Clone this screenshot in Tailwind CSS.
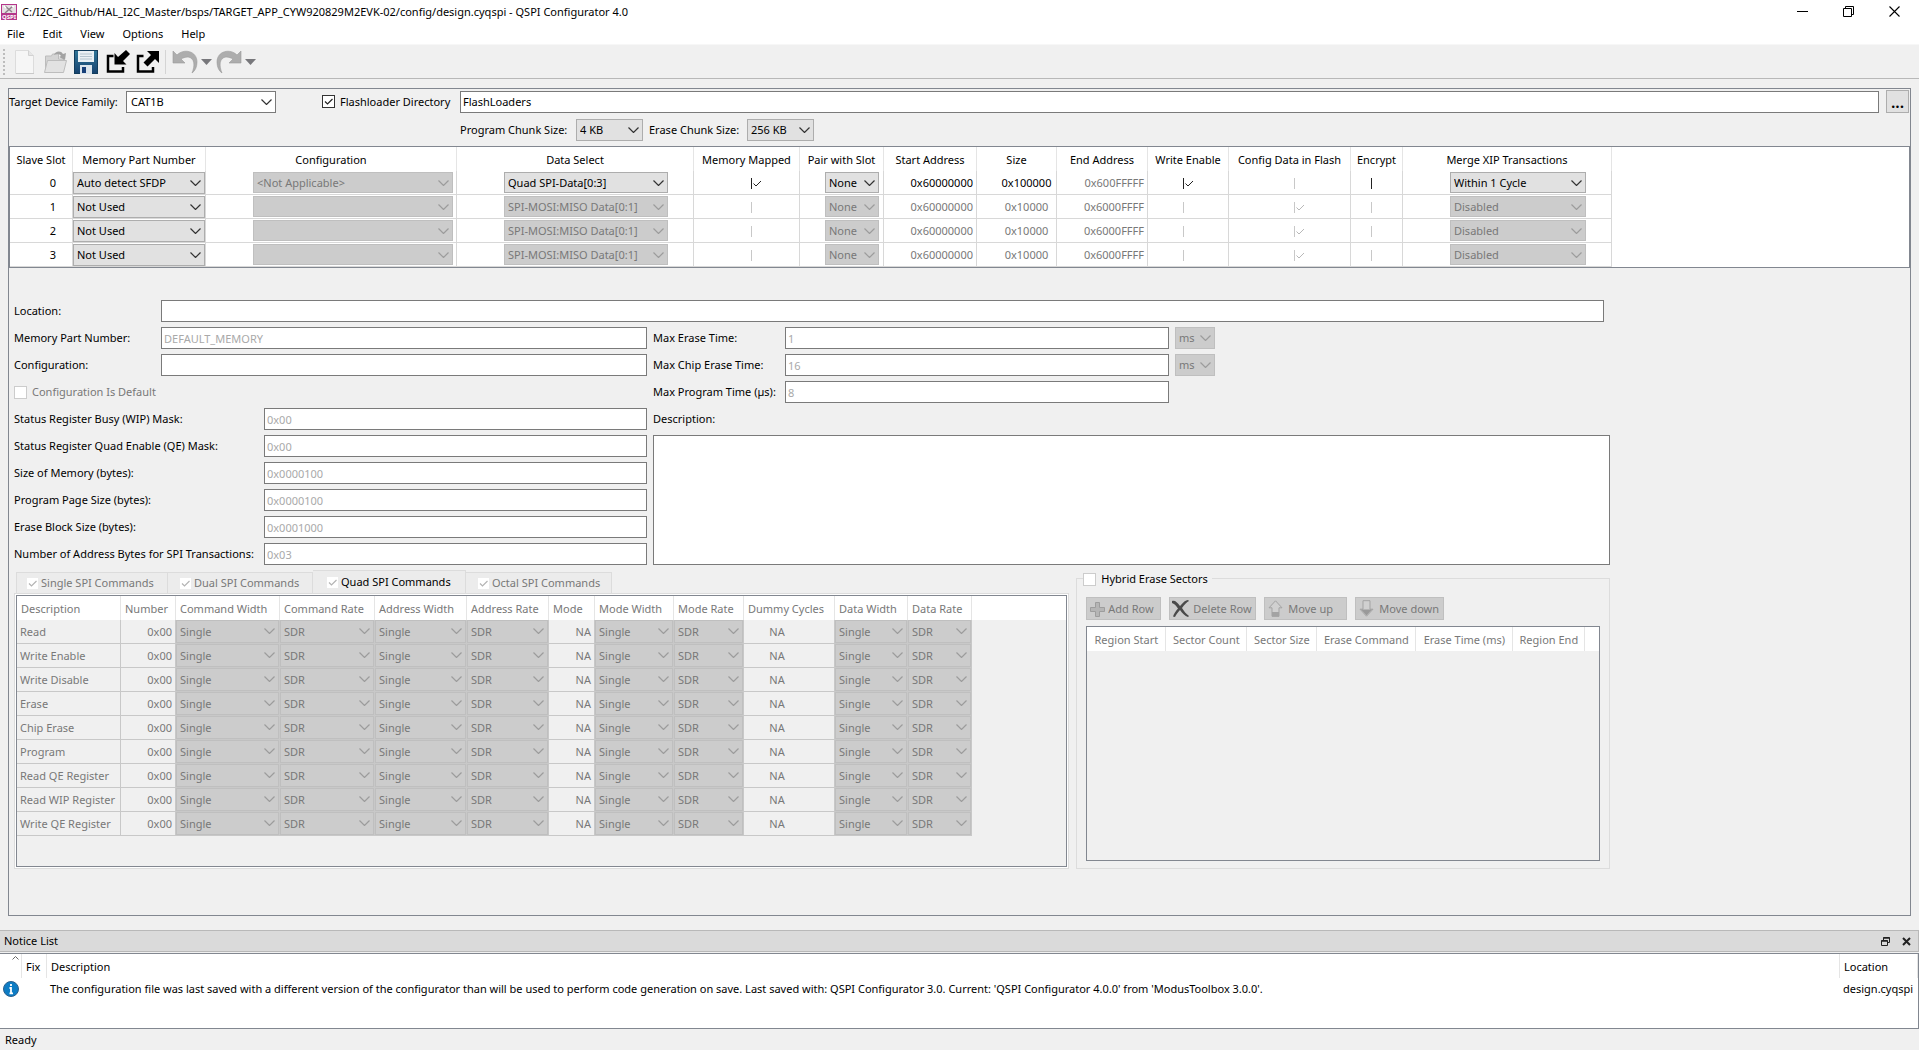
<!DOCTYPE html>
<html lang="en">
<head>
  <meta charset="UTF-8" />
  <meta name="viewport" content="width=device-width, initial-scale=1" />
  <title>QSPI Configurator 4.0</title>
  <script src="https://cdn.jsdelivr.net/npm/@tailwindcss/browser@4"></script>
  <style>
    body {
      font-family: 'Noto Sans', 'Open Sans', sans-serif;
    }
  </style>
</head>
<body class="min-h-screen flex flex-col bg-[#f0f0f0] text-black text-[11px] leading-4 whitespace-nowrap">

  <!-- Title bar -->
  <header class="bg-white">
    <div class="flex items-center h-[23px] pl-px">
      <svg class="w-4 h-4" viewBox="0 0 16 16">
        <rect width="16" height="16" fill="#b5368a" />
        <rect x="1" y="1" width="14" height="8" fill="#e6dfe3" />
        <path d="M4 2l7 6M12 2L4 9" stroke="#8d8489" stroke-width="1.5" />
        <path d="M3 2l2 2M11 2l2 1" stroke="#fff" stroke-width="1.5" />
        <text x="8" y="15" text-anchor="middle" font-size="6" font-weight="700" fill="#fff">QSPI</text>
      </svg>
      <h1 class="ml-[5px] flex-1">C:/I2C_Github/HAL_I2C_Master/bsps/TARGET_APP_CYW920829M2EVK-02/config/design.cyqspi - QSPI Configurator 4.0</h1>
      <div class="flex items-center pr-[2px]">
        <button type="button" aria-label="Minimize" class="w-[46px] h-5 grid place-items-center">
          <svg class="w-[11px] h-[11px]" viewBox="0 0 11 11" fill="none" stroke="#000"><path d="M0 5.5h11" /></svg>
        </button>
        <button type="button" aria-label="Restore" class="w-[46px] h-5 grid place-items-center">
          <svg class="w-[11px] h-[11px]" viewBox="0 0 11 11" fill="none" stroke="#000"><path d="M.5 2.5h8v8h-8zM2.5 2.5v-2h8v8h-2" /></svg>
        </button>
        <button type="button" aria-label="Close" class="w-[46px] h-5 grid place-items-center">
          <svg class="w-[11px] h-[11px]" viewBox="0 0 11 11" fill="none" stroke="#000" stroke-width="1.1"><path d="M.5.5l10 10M10.5.5l-10 10" /></svg>
        </button>
      </div>
    </div>
    <nav class="flex gap-[18px] h-[21px] items-center pl-[7px]">
      <a href="#">File</a>
      <a href="#">Edit</a>
      <a href="#">View</a>
      <a href="#">Options</a>
      <a href="#">Help</a>
    </nav>
  </header>

  <!-- Toolbar -->
  <div class="flex items-center h-[35px] pl-[3px] border-t border-b border-t-[#f7f7f7] border-b-[#b8b8b8]">
    <span class="w-[3px] h-[26px] border-l-2 border-dotted border-[#bdbdbd]"></span>
    <button type="button" aria-label="New" disabled class="ml-2">
      <svg class="w-6 h-6" viewBox="0 0 24 24">
        <path d="M1.500 .5h13l5 5v18h-18z" fill="#f6f6f6" stroke="#dcdcdc" />
        <path d="M14.500 .5v5h5" fill="#e6e6e6" stroke="#d2d2d2" />
        <path d="M2 23.500h18" stroke="#c9c9c9" />
      </svg>
    </button>
    <button type="button" aria-label="Open" disabled class="ml-[6px]">
      <svg class="w-6 h-6" viewBox="0 0 24 24">
        <path d="M1.500 20V6h6l1-2h6v5h5v11z" fill="#d4d4d4" stroke="#bcbcbc" />
        <path d="M.5 22.500l3-12h19l-3 12z" fill="#e2e2e2" stroke="#bdbdbd" />
        <path d="M10 5c1-4 7-5 9-1l3-1-1 7-6-3 2-1c-1-2-4-3-7-1z" fill="#a3a3a3" />
      </svg>
    </button>
    <button type="button" aria-label="Save" class="ml-[6px]">
      <svg class="w-6 h-6" viewBox="0 0 24 24">
        <defs>
          <linearGradient id="disk" x1="0" y1="0" x2="0" y2="1">
            <stop offset="0" stop-color="#2f7597" />
            <stop offset="1" stop-color="#17436f" />
          </linearGradient>
        </defs>
        <rect x=".5" y=".5" width="23" height="23" fill="url(#disk)" stroke="#123d5c" />
        <path d="M4 1h16v11H4z" fill="#e9f0f4" />
        <path d="M6 4h12M6 6.500h12M6 9h12" stroke="#b4c4ce" />
        <path d="M6 15h12v9H6z" fill="#dce5ec" />
        <path d="M8 17h4v6H8z" fill="#173f78" />
      </svg>
    </button>
    <button type="button" aria-label="Import" class="ml-2">
      <svg class="w-6 h-6" viewBox="0 0 24 24">
        <path d="M7.500 6H2v15.500h15V17" fill="none" stroke="#000" stroke-width="2.500" />
        <path d="M20 0l4 4-7 7 3.500 3.500H8.500V3l3.500 4z" />
      </svg>
    </button>
    <button type="button" aria-label="Export" class="ml-[6px]">
      <svg class="w-6 h-6" viewBox="0 0 24 24">
        <path d="M7.500 6H2v15.500h15V17" fill="none" stroke="#000" stroke-width="2.500" />
        <path d="M11 1h12v12l-4-4-7.500 7.500-4-4L15 5z" />
      </svg>
    </button>
    <span class="ml-[5px] w-px h-6 bg-[#d4d4d4]"></span>
    <button type="button" aria-label="Undo" disabled class="flex items-center gap-[3px] ml-[6px]">
      <svg class="w-[26px] h-6" viewBox="0 0 26 24">
        <path d="M1 1l4 4c7-7 20-4 20 7 0 5-2 9-5 11 3-7 3-15-4-16-3 0-5 1-7 2l4 4H1z" fill="#adadad" stroke="#9a9a9a" stroke-width=".6" />
      </svg>
      <svg class="w-[11px] h-[6px]" viewBox="0 0 11 6"><path d="M0 0h11L5.500 6z" fill="#77777b" /></svg>
    </button>
    <button type="button" aria-label="Redo" disabled class="flex items-center gap-[3px] ml-1">
      <svg class="w-[26px] h-6" viewBox="0 0 26 24">
        <path d="M25 1l-4 4C14-2 1 1 1 12c0 5 2 9 5 11C3 16 3 8 10 7c3 0 5 1 7 2l-4 4h12z" fill="#adadad" stroke="#9a9a9a" stroke-width=".6" />
      </svg>
      <svg class="w-[11px] h-[6px]" viewBox="0 0 11 6"><path d="M0 0h11L5.500 6z" fill="#77777b" /></svg>
    </button>
  </div>

  <main class="flex-1 flex flex-col mt-[9px] mx-2 mb-[14px] pt-px border border-[#828790]">

    <!-- Device options -->
    <div class="flex items-center h-[23px] pr-px">
      <label for="family" class="w-[117px]">Target Device Family:</label>
      <div class="relative w-[150px] h-[22px]">
        <select id="family" class="appearance-none w-full h-full pl-1 bg-white border border-[#7a7a7a]">
          <option>CAT1B</option>
        </select>
        <svg class="absolute right-[4px] top-2 w-[11px] h-[6px] pointer-events-none" viewBox="0 0 11 6" fill="none" stroke="#333" stroke-width="1.200"><path d="M.5.5l5 5 5-5" /></svg>
      </div>
      <label class="ml-[46px] w-[138px] flex items-center gap-[5px]">
        <span class="grid">
          <input type="checkbox" id="useDir" checked class="appearance-none [grid-area:1/1] w-[13px] h-[13px] bg-white border border-[#333]" />
          <svg class="[grid-area:1/1] w-[13px] h-[13px] pointer-events-none" viewBox="0 0 13 13" fill="none" stroke="#222" stroke-width="1.200"><path d="M3 6.500l2.500 2.500L10.500 4" /></svg>
        </span>
        Flashloader Directory
      </label>
      <input type="text" id="loaderDir" aria-label="Flashloader Directory path" value="FlashLoaders" class="flex-1 h-[22px] px-[2px] bg-white border border-[#7a7a7a]" />
      <button type="button" class="ml-[7px] w-[23px] h-[23px] bg-[#e1e1e1] border border-[#adadad] text-base leading-4 font-semibold">...</button>
    </div>
    <div class="flex items-center mt-[6px] mb-[5px] pl-[451px]">
      <label for="progChunk" class="w-[116px]">Program Chunk Size:</label>
      <div class="relative w-[67px] h-[22px]">
        <select id="progChunk" class="appearance-none w-full h-full pl-[3px] bg-[#e1e1e1] border border-[#adadad]">
          <option>4 KB</option>
        </select>
        <svg class="absolute right-[4px] top-2 w-[11px] h-[6px] pointer-events-none" viewBox="0 0 11 6" fill="none" stroke="#333" stroke-width="1.200"><path d="M.5.5l5 5 5-5" /></svg>
      </div>
      <label for="eraseChunk" class="ml-[6px] w-[98px]">Erase Chunk Size:</label>
      <div class="relative w-[67px] h-[22px]">
        <select id="eraseChunk" class="appearance-none w-full h-full pl-[3px] bg-[#e1e1e1] border border-[#adadad]">
          <option>256 KB</option>
        </select>
        <svg class="absolute right-[4px] top-2 w-[11px] h-[6px] pointer-events-none" viewBox="0 0 11 6" fill="none" stroke="#333" stroke-width="1.200"><path d="M.5.5l5 5 5-5" /></svg>
      </div>
    </div>

    <!-- Slave slots -->
    <div class="bg-white border border-[#828790]">
      <table class="table-fixed w-[1602px] border-separate border-spacing-0">
        <colgroup>
          <col class="w-[63px]" /><col class="w-[133px]" /><col class="w-[251px]" /><col class="w-[237px]" />
          <col class="w-[106px]" /><col class="w-[84px]" /><col class="w-[93px]" /><col class="w-[80px]" />
          <col class="w-[91px]" /><col class="w-[81px]" /><col class="w-[122px]" /><col class="w-[52px]" /><col class="w-[209px]" />
        </colgroup>
        <thead>
          <tr id="slotHead"></tr>
        </thead>
        <tbody id="slotRows"></tbody>
      </table>
    </div>

    <!-- Memory details -->
    <div class="w-full max-w-[1601px] pl-[5px] pt-8 flex flex-col">
      <div class="flex items-center mb-[5px] pr-[6px]">
        <label for="location" class="w-[147px]">Location:</label>
        <input type="text" id="location" class="flex-1 h-[22px] px-[2px] bg-white border border-[#7a7a7a]" />
      </div>
      <div class="grid grid-cols-[633fr_957fr] gap-x-[6px]">
        <div id="leftFields" class="flex flex-col gap-[5px]"></div>
        <div class="flex flex-col gap-[5px]">
          <div id="timeFields" class="flex flex-col gap-[5px]"></div>
          <label for="description" class="h-[22px] flex items-center">Description:</label>
          <textarea id="description" class="flex-1 resize-none bg-white border border-[#7a7a7a]"></textarea>
        </div>
      </div>

      <div class="grid grid-cols-[1056fr_534fr] gap-x-[7px] mt-[5px]">
        <!-- SPI command tabs -->
        <section class="flex flex-col">
          <div class="flex items-end pl-[2px]" id="tabs"></div>
          <div class="h-[276px] bg-white border border-[#dcdcdc] p-px">
            <div class="h-full bg-[#f0f0f0] border border-[#828790]">
              <table class="table-fixed w-full border-separate border-spacing-0 text-[#787878]">
                <colgroup>
                  <col class="w-[104px]" /><col class="w-[55px]" /><col class="w-[104px]" /><col class="w-[95px]" />
                  <col class="w-[92px]" /><col class="w-[82px]" /><col class="w-[46px]" /><col class="w-[79px]" />
                  <col class="w-[70px]" /><col class="w-[91px]" /><col class="w-[73px]" /><col class="w-[64px]" /><col />
                </colgroup>
                <thead>
                  <tr id="cmdHead"></tr>
                </thead>
                <tbody id="cmdRows"></tbody>
              </table>
            </div>
          </div>
        </section>

        <!-- Hybrid erase sectors -->
        <fieldset class="mt-px border border-[#dcdcdc] px-[9px] pb-[7px] flex flex-col">
          <legend class="-ml-[3px] pr-1 h-[15px]">
            <label class="flex items-center gap-[5px]">
              <input type="checkbox" id="hybrid" class="appearance-none w-[13px] h-[13px] bg-white border border-[#cccccc]" />
              Hybrid Erase Sectors
            </label>
          </legend>
          <div class="flex gap-2 mt-[11px] text-[#787878]">
            <button type="button" disabled class="w-[75px] h-[23px] flex items-center gap-[3px] pl-[3px] bg-[#cccccc] border border-[#bfbfbf]">
              <svg class="w-[15px] h-4" viewBox="0 0 15 16"><path d="M5.500 1.500h4v5h5v4h-5v5h-4v-5h-5v-4h5z" fill="#b5b5b5" stroke="#9d9d9d" /></svg>
              Add Row
            </button>
            <button type="button" disabled class="w-[87px] h-[23px] flex items-center gap-1 pl-[2px] bg-[#cccccc] border border-[#bfbfbf]">
              <svg class="w-[17px] h-[17px]" viewBox="0 0 17 17"><path d="M0 1c3-1 5 1 8 5 2-2 5-6 8-6l1 1c-2 1-5 4-7 7 2 3 4 6 7 8l-1 1c-3-1-6-4-8-7-2 2-4 5-5 7l-2-.5c1-3 3-6 5-8-2-3-4-5-6-5.500z" fill="#4a4a4a" /></svg>
              Delete Row
            </button>
            <button type="button" disabled class="w-[83px] h-[23px] flex items-center gap-[5px] pl-[3px] bg-[#cccccc] border border-[#bfbfbf]">
              <svg class="w-[15px] h-[17px]" viewBox="0 0 15 17"><path d="M7.500.8l6.500 7h-3v8.500H4V7.800H1z" fill="#d0d0d0" stroke="#a3a3a3" /><path d="M4 12h7v4.500H4z" fill="#a3a3a3" /></svg>
              Move up
            </button>
            <button type="button" disabled class="w-[89px] h-[23px] flex items-center gap-[5px] pl-[3px] bg-[#cccccc] border border-[#bfbfbf]">
              <svg class="w-[15px] h-[17px]" viewBox="0 0 15 17"><path d="M7.500 16.200l6.500-7h-3V.7H4v8.500H1z" fill="#d0d0d0" stroke="#a3a3a3" /><path d="M2 9.500h11l-5.500 6z" fill="#9a9a9a" /></svg>
              Move down
            </button>
          </div>
          <div class="flex-1 mt-[6px] border border-[#828790]">
            <div class="bg-white">
              <table class="table-fixed w-[498px] border-separate border-spacing-0 text-[#787878]">
                <colgroup>
                  <col class="w-[79px]" /><col class="w-[81px]" /><col class="w-[70px]" /><col class="w-[99px]" /><col class="w-[97px]" /><col class="w-[72px]" />
                </colgroup>
                <thead>
                  <tr id="sectorHead"></tr>
                </thead>
              </table>
            </div>
          </div>
        </fieldset>
      </div>
    </div>
  </main>

  <!-- Notice list -->
  <section>
    <div class="flex items-center h-[22px] pl-1 pr-[7px] bg-[#dadada] border border-l-0 border-[#b8b8b8]">
      <h2 class="flex-1">Notice List</h2>
      <button type="button" aria-label="Float" class="mr-3">
        <svg class="w-[9px] h-[9px]" viewBox="0 0 9 9" fill="none" stroke="#222"><path d="M.5 3.500h6v5h-6zM2.500 3V.5h6v5H7" /><path d="M.5 4h6M2.500 1h6" stroke-width="1.500" /></svg>
      </button>
      <button type="button" aria-label="Close notices">
        <svg class="w-[9px] h-[9px]" viewBox="0 0 9 9" fill="none" stroke="#222" stroke-width="2"><path d="M1 1l7 7M8 1L1 8" /></svg>
      </button>
    </div>
    <div class="mt-px h-[76px] bg-white border border-l-0 border-[#828790]">
      <table class="table-fixed w-full border-separate border-spacing-0 text-left">
        <colgroup>
          <col class="w-[22px]" /><col class="w-[25px]" /><col /><col class="w-[78px]" />
        </colgroup>
        <thead>
          <tr class="h-6">
            <th class="p-0 font-normal align-top border-r border-[#e5e5e5]">
              <svg class="ml-3 mt-[2px] w-[7px] h-1" viewBox="0 0 7 4" fill="none" stroke="#666"><path d="M.5 3.500l3-3 3 3" /></svg>
            </th>
            <th class="font-normal pl-1 pt-[2px] border-r border-[#e5e5e5]">Fix</th>
            <th class="font-normal pl-1 pt-[2px] border-r border-[#e5e5e5]">Description</th>
            <th class="font-normal pl-1 pt-[2px] border-r border-[#e5e5e5]">Location</th>
          </tr>
        </thead>
        <tbody>
          <tr class="h-[21px]">
            <td class="pl-[3px]">
              <svg class="w-4 h-4" viewBox="0 0 16 16">
                <circle cx="8" cy="8" r="7.500" fill="#0d7cc4" stroke="#2b5f8c" />
                <path d="M8 3v2M6.500 7H8v5M6.500 12.300h3.500" fill="none" stroke="#fff" stroke-width="1.800" />
              </svg>
            </td>
            <td></td>
            <td class="pl-[3px]">The configuration file was last saved with a different version of the configurator than will be used to perform code generation on save. Last saved with: QSPI Configurator 3.0. Current: 'QSPI Configurator 4.0.0' from 'ModusToolbox 3.0.0'.</td>
            <td class="pl-[3px]">design.cyqspi</td>
          </tr>
        </tbody>
      </table>
    </div>
    <footer class="h-[21px] pl-[5px] flex items-center">Ready</footer>
  </section>

  <script>
    const byId = id => document.getElementById(id);

    // combo box; size holds the width/height classes
    function combo(text, label, disabled, size) {
      const look = disabled
        ? 'bg-[#cccccc] border-[#bfbfbf] text-[#787878] opacity-100'
        : 'bg-[#e1e1e1] border-[#adadad] text-black';
      return `
        <div class="relative ${size}">
          <select aria-label="${label}" class="block appearance-none w-full h-full pl-[3px] border ${look}" ${disabled ? 'disabled' : ''}>
            <option>${text}</option>
          </select>
          <svg class="absolute right-[4px] top-2 w-[11px] h-[6px] pointer-events-none" viewBox="0 0 11 6" fill="none" stroke="${disabled ? '#9c9c9c' : '#333'}" stroke-width="1.200"><path d="M.5.5l5 5 5-5" /></svg>
        </div>`;
    }

    // narrow check box that only shows its left edge and the tick
    function tick(checked, label, disabled) {
      const edge = disabled ? 'border-[#c8c8c8]' : 'border-[#222]';
      const mark = checked
        ? `<svg class="[grid-area:1/1] w-[11px] h-[11px] pointer-events-none" viewBox="0 0 11 11" fill="none" stroke="${disabled ? '#b8b8b8' : '#222'}"><path d="M2.500 5.500l2.500 2.500 5-5" /></svg>`
        : '';
      return `
        <div class="inline-grid align-middle">
          <input type="checkbox" aria-label="${label}" class="appearance-none [grid-area:1/1] w-[11px] h-[11px] border-l ${edge}" ${checked ? 'checked' : ''} ${disabled ? 'disabled' : ''} />
          ${mark}
        </div>`;
    }

    // Slave slots table
    const slotCols = ['Slave Slot', 'Memory Part Number', 'Configuration', 'Data Select', 'Memory Mapped', 'Pair with Slot', 'Start Address', 'Size', 'End Address', 'Write Enable', 'Config Data in Flash', 'Encrypt', 'Merge XIP Transactions'];
    const slots = [
      { part: 'Auto detect SFDP', config: '&lt;Not Applicable&gt;', data: 'Quad SPI-Data[0:3]', mapped: true, size: '0x100000', end: '0x600FFFFF', write: true, flash: false, merge: 'Within 1 Cycle', on: true },
      { part: 'Not Used', config: '', data: 'SPI-MOSI:MISO Data[0:1]', mapped: false, size: '0x10000', end: '0x6000FFFF', write: false, flash: true, merge: 'Disabled', on: false },
      { part: 'Not Used', config: '', data: 'SPI-MOSI:MISO Data[0:1]', mapped: false, size: '0x10000', end: '0x6000FFFF', write: false, flash: true, merge: 'Disabled', on: false },
      { part: 'Not Used', config: '', data: 'SPI-MOSI:MISO Data[0:1]', mapped: false, size: '0x10000', end: '0x6000FFFF', write: false, flash: true, merge: 'Disabled', on: false }
    ];
    byId('slotHead').innerHTML = slotCols
      .map(c => `<th class="h-6 pt-[2px] font-normal border-r border-[#e5e5e5]">${c}</th>`)
      .join('');
    byId('slotRows').innerHTML = slots.map((s, i) => {
      const off = !s.on;
      const cell = 'h-6 border-r border-b border-[#d8d8d8]';
      const tone = off ? 'text-[#787878]' : 'text-black';
      return `
        <tr>
          <td class="${cell} text-right pr-4">${i}</td>
          <td class="${cell}">${combo(s.part, 'Memory part, slot ' + i, false, 'w-full h-[22px]')}</td>
          <td class="${cell} pl-[47px]">${combo(s.config, 'Configuration, slot ' + i, true, 'w-[200px] h-[21px]')}</td>
          <td class="${cell} pl-[47px]">${combo(s.data, 'Data select, slot ' + i, off, 'w-[164px] h-[21px]')}</td>
          <td class="${cell} text-center pl-5">${tick(s.mapped, 'Memory mapped, slot ' + i, off)}</td>
          <td class="${cell} pl-[25px]">${combo('None', 'Pair with slot, slot ' + i, off, 'w-[54px] h-[21px]')}</td>
          <td class="${cell} ${tone} text-right pr-[3px]">0x60000000</td>
          <td class="${cell} ${tone} text-center pl-5">${s.size}</td>
          <td class="${cell} text-[#787878] text-right pr-[3px]">${s.end}</td>
          <td class="${cell} text-center">${tick(s.write, 'Write enable, slot ' + i, off)}</td>
          <td class="${cell} text-center pl-5">${tick(s.flash, 'Config data in flash, slot ' + i, true)}</td>
          <td class="${cell} text-center">${tick(false, 'Encrypt, slot ' + i, off)}</td>
          <td class="${cell} pl-[47px]">${combo(s.merge, 'Merge XIP transactions, slot ' + i, off, 'w-[136px] h-[21px]')}</td>
        </tr>`;
    }).join('');

    // Memory fields
    const leftFields = [
      ['Memory Part Number:', 'DEFAULT_MEMORY', 'w-[147px]'],
      ['Configuration:', '', 'w-[147px]'],
      null,
      ['Status Register Busy (WIP) Mask:', '0x00', 'w-[250px]'],
      ['Status Register Quad Enable (QE) Mask:', '0x00', 'w-[250px]'],
      ['Size of Memory (bytes):', '0x0000100', 'w-[250px]'],
      ['Program Page Size (bytes):', '0x0000100', 'w-[250px]'],
      ['Erase Block Size (bytes):', '0x0001000', 'w-[250px]'],
      ['Number of Address Bytes for SPI Transactions:', '0x03', 'w-[250px]']
    ];
    byId('leftFields').innerHTML = leftFields.map((f, i) => f ? `
      <div class="flex items-center">
        <label for="field${i}" class="${f[2]}">${f[0]}</label>
        <input type="text" id="field${i}" value="${f[1]}" disabled class="flex-1 min-w-0 h-[22px] px-[2px] bg-white border border-[#7a7a7a] text-[#a9a9a9]" />
      </div>` : `
      <label class="h-[22px] flex items-center gap-[5px] text-[#787878]">
        <input type="checkbox" disabled class="appearance-none w-[13px] h-[13px] bg-white border border-[#cccccc]" />
        Configuration Is Default
      </label>`).join('');

    const timeFields = [
      ['Max Erase Time:', '1', true],
      ['Max Chip Erase Time:', '16', true],
      ['Max Program Time (µs):', '8', false]
    ];
    byId('timeFields').innerHTML = timeFields.map((f, i) => `
      <div class="grid grid-cols-[132px_384fr_441fr] items-center">
        <label for="time${i}">${f[0]}</label>
        <input type="text" id="time${i}" value="${f[1]}" disabled class="w-full min-w-0 h-[22px] px-[2px] bg-white border border-[#7a7a7a] text-[#a9a9a9]" />
        ${f[2] ? `<div class="pl-[6px]">${combo('ms', f[0] + ' unit', true, 'w-10 h-[22px]')}</div>` : ''}
      </div>`).join('');

    // SPI command tabs
    const tabs = [
      ['Single SPI Commands', 'w-[152px] pl-[10px] border-l'],
      ['Dual SPI Commands', 'w-[145px] pl-3'],
      ['Quad SPI Commands', 'w-[153px] pl-[14px]'],
      ['Octal SPI Commands', 'w-[146px] pl-3']
    ];
    byId('tabs').innerHTML = tabs.map((t, i) => {
      const look = i === 2 ? 'h-[23px] text-black' : 'h-[21px] text-[#787878]';
      return `
        <label class="${t[1]} ${look} flex items-center gap-[3px] bg-[#ececec] border-t border-r border-[#dcdcdc]">
          <span class="grid">
            <input type="checkbox" checked disabled class="appearance-none [grid-area:1/1] w-[11px] h-[11px] bg-white" />
            <svg class="[grid-area:1/1] w-[11px] h-[11px] pointer-events-none" viewBox="0 0 11 11" fill="none" stroke="#b4b4b4" stroke-width="1.200"><path d="M2 5.500l2.500 2.500 5-5" /></svg>
          </span>
          ${t[0]}
        </label>`;
    }).join('');

    const cmdCols = ['Description', 'Number', 'Command Width', 'Command Rate', 'Address Width', 'Address Rate', 'Mode', 'Mode Width', 'Mode Rate', 'Dummy Cycles', 'Data Width', 'Data Rate'];
    const commands = ['Read', 'Write Enable', 'Write Disable', 'Erase', 'Chip Erase', 'Program', 'Read QE Register', 'Read WIP Register', 'Write QE Register'];
    byId('cmdHead').innerHTML = cmdCols
      .map(c => `<th class="h-6 pl-1 pt-[2px] text-left font-normal bg-white border-r border-[#e5e5e5]">${c}</th>`)
      .join('') + '<td class="bg-white"></td>';
    byId('cmdRows').innerHTML = commands.map(name => {
      const cell = 'h-6 border-r border-b border-[#c8c8c8]';
      const pick = (value, label) => `<td class="${cell}">${combo(value, name + ' ' + label, true, 'w-full h-[23px]')}</td>`;
      return `
        <tr>
          <td class="${cell} pl-[3px]">${name}</td>
          <td class="${cell} text-right pr-[3px]">0x00</td>
          ${pick('Single', 'command width')}
          ${pick('SDR', 'command rate')}
          ${pick('Single', 'address width')}
          ${pick('SDR', 'address rate')}
          <td class="${cell} text-right pr-[3px]">NA</td>
          ${pick('Single', 'mode width')}
          ${pick('SDR', 'mode rate')}
          <td class="${cell} text-center pr-6">NA</td>
          ${pick('Single', 'data width')}
          ${pick('SDR', 'data rate')}
          <td></td>
        </tr>`;
    }).join('');

    byId('sectorHead').innerHTML = ['Region Start', 'Sector Count', 'Sector Size', 'Erase Command', 'Erase Time (ms)', 'Region End']
      .map(c => `<th class="h-6 pt-[2px] font-normal border-r border-[#e5e5e5]">${c}</th>`)
      .join('');
  </script>
</body>
</html>
